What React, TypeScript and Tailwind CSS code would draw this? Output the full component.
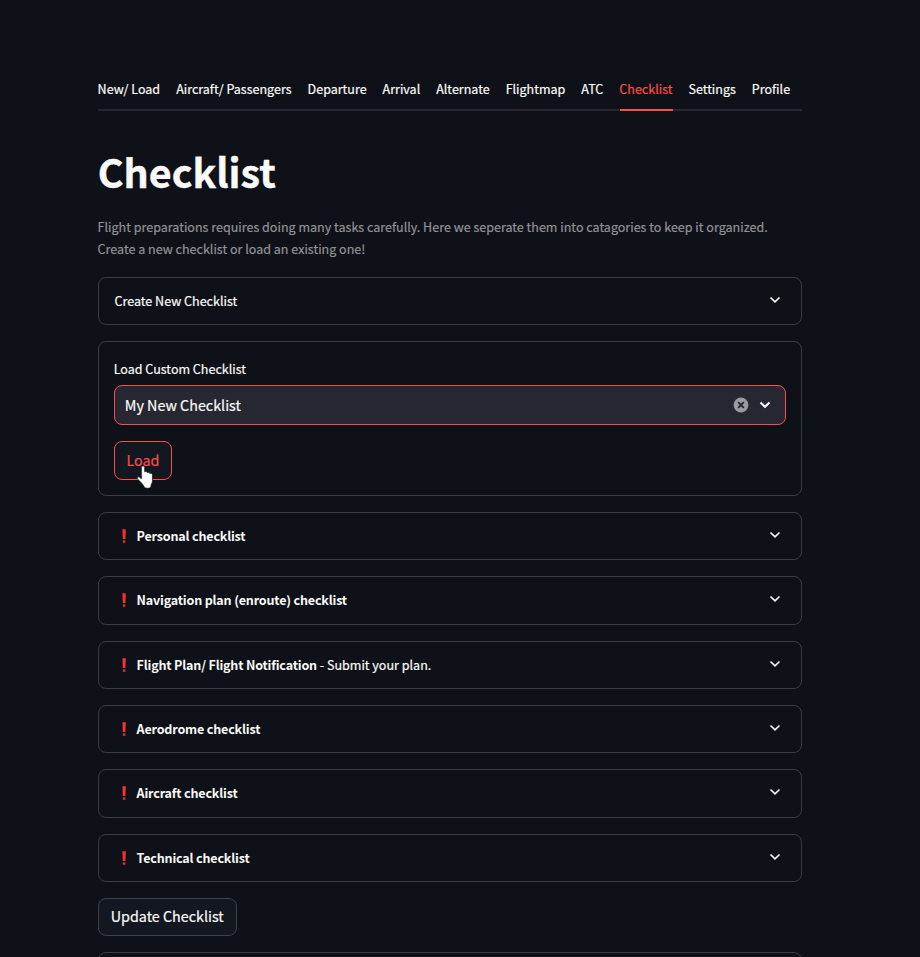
import type { ReactNode } from "react";

const tabs = ["New/ Load", "Aircraft/ Passengers", "Departure", "Arrival", "Alternate", "Flightmap", "ATC", "Checklist", "Settings", "Profile"];

const sections: { title: string; note?: string }[] = [
  { title: "Personal checklist" },
  { title: "Navigation plan (enroute) checklist" },
  { title: "Flight Plan/ Flight Notification", note: " - Submit your plan." },
  { title: "Aerodrome checklist" },
  { title: "Aircraft checklist" },
  { title: "Technical checklist" },
];

function Chevron({ bold = false }: { bold?: boolean }) {
  return (
    <svg width="12" height="8" viewBox="0 0 12 8" fill="none" stroke="#fafafa" strokeWidth={bold ? 2.1 : 1.7} className="shrink-0">
      <path d="M1.5 1.5 6 5.8l4.5-4.3" />
    </svg>
  );
}

function Expander({ children }: { children: ReactNode }) {
  return (
    <div className="flex h-[48.4px] shrink-0 items-center justify-between rounded-lg border border-[#3b3d44] pr-[20px] pb-[0.2px] pl-[15.4px]">
      <div className="flex items-center text-[12.55px] leading-[22px] whitespace-pre">{children}</div>
      <div className="pb-[2px]">
        <Chevron />
      </div>
    </div>
  );
}

function Exclamation() {
  return (
    <svg width="6" height="14" viewBox="0 0 6 14" fill="#f8312f" className="mr-[9.6px] ml-[6.6px] shrink-0">
      <path d="M1.400 0.2h3.400L4.400 10H1.800z" />
      <path d="M1.800 11.500h2.600v2.200H1.800z" />
    </svg>
  );
}

export default function App() {
  return (
    <div className="h-[957px] overflow-hidden bg-[#0e1117] pt-[74px] pr-[118px] pl-[98px] font-['Noto_Sans_CJK_SC',sans-serif] text-[#fafafa] [-webkit-text-stroke:0.2px]">
      <nav className="flex h-[37px] gap-4 border-b-2 border-[#262730] text-[12.53px] leading-[30px] whitespace-nowrap">
        {tabs.map((t) => (
          <div key={t} className={t === "Checklist" ? "h-[37px] border-b-2 border-[#ff4b4b] text-[#ff4b4b]" : "h-[37px]"}>
            <span className="mr-[0.4px] -ml-[0.4px]">{t}</span>
          </div>
        ))}
      </nav>
      <h1 className="mt-[34px] -ml-[0.3px] text-[39.4px] leading-[52px] font-bold [-webkit-text-stroke:0.4px]">Checklist</h1>
      <p className="mt-[19px] -ml-[0.4px] text-[12.54px] leading-[22.4px] text-[#929397]">
        Flight preparations requires doing many tasks carefully. Here we seperate them into catagories to keep it organized.
        <br />
        Create a new checklist or load an existing one!
      </p>
      <main className="mt-[16.16px] flex flex-col gap-4">
        <Expander>Create New Checklist</Expander>
        <section className="h-[154.4px] rounded-lg border border-[#3b3d44] px-[15px] pt-[16px]">
          <label className="-ml-[0.3px] block text-[12.53px] leading-[22px]">Load Custom Checklist</label>
          <div className="mt-[5px] flex h-10 items-center rounded-lg border border-[#ff4b4b] bg-[#262730] pr-[14px] pl-[9.8px]">
            <span className="flex-1 text-[14.32px] leading-6">My New Checklist</span>
            <svg width="16" height="16" viewBox="0 0 16 16" className="mr-[10px]">
              <circle cx="8" cy="8" r="7.4" fill="#969c9f" />
              <path d="m5.2 5.2 5.600 5.600m0-5.600-5.600 5.600" stroke="#262730" strokeWidth="1.9" />
            </svg>
            <Chevron bold />
          </div>
          <button className="relative mt-4 flex h-[39px] w-[58px] items-center justify-center rounded-lg border border-[#ff4b4b] bg-[#131720] pb-[2px] text-[14.32px] leading-6 text-[#ff4b4b]">
            Load
            <svg width="18" height="24" viewBox="0 0 18 24" className="absolute top-[22.5px] left-[20.5px]">
              <path
                d="M5.400 2.600c0-2.200 3.300-2.200 3.300 0v4.200c1-.5 2.200-.1 2.500.7 1-.4 2.100 0 2.400.8 1.400-.4 2.900.3 2.900 1.900v4.800c0 2-.6 3.200-1.200 4.300l-.6 3.200c-1.500 1-4.700 1-6.300 0-.3-1.700-1.500-2.700-2.500-4.100L1.400 13.800c-.7-1.400.7-2.500 1.900-1.700l2.100 1.700z"
                fill="#fff"
                stroke="#0e1117"
                strokeWidth=".7"
              />
            </svg>
          </button>
        </section>
        {sections.map((s) => (
          <Expander key={s.title}>
            <Exclamation />
            <b className="tracking-[-0.18px] [-webkit-text-stroke:0px]">{s.title}</b>
            {s.note && <span>{s.note}</span>}
          </Expander>
        ))}
        <button className="flex h-[38.2px] w-[139px] shrink-0 items-center justify-center rounded-lg border border-[#3f4148] bg-[#131720] pr-[0.6px] pb-[2px] text-[14.32px] leading-6">
          Update Checklist
        </button>
        <Expander>{null}</Expander>
      </main>
    </div>
  );
}
